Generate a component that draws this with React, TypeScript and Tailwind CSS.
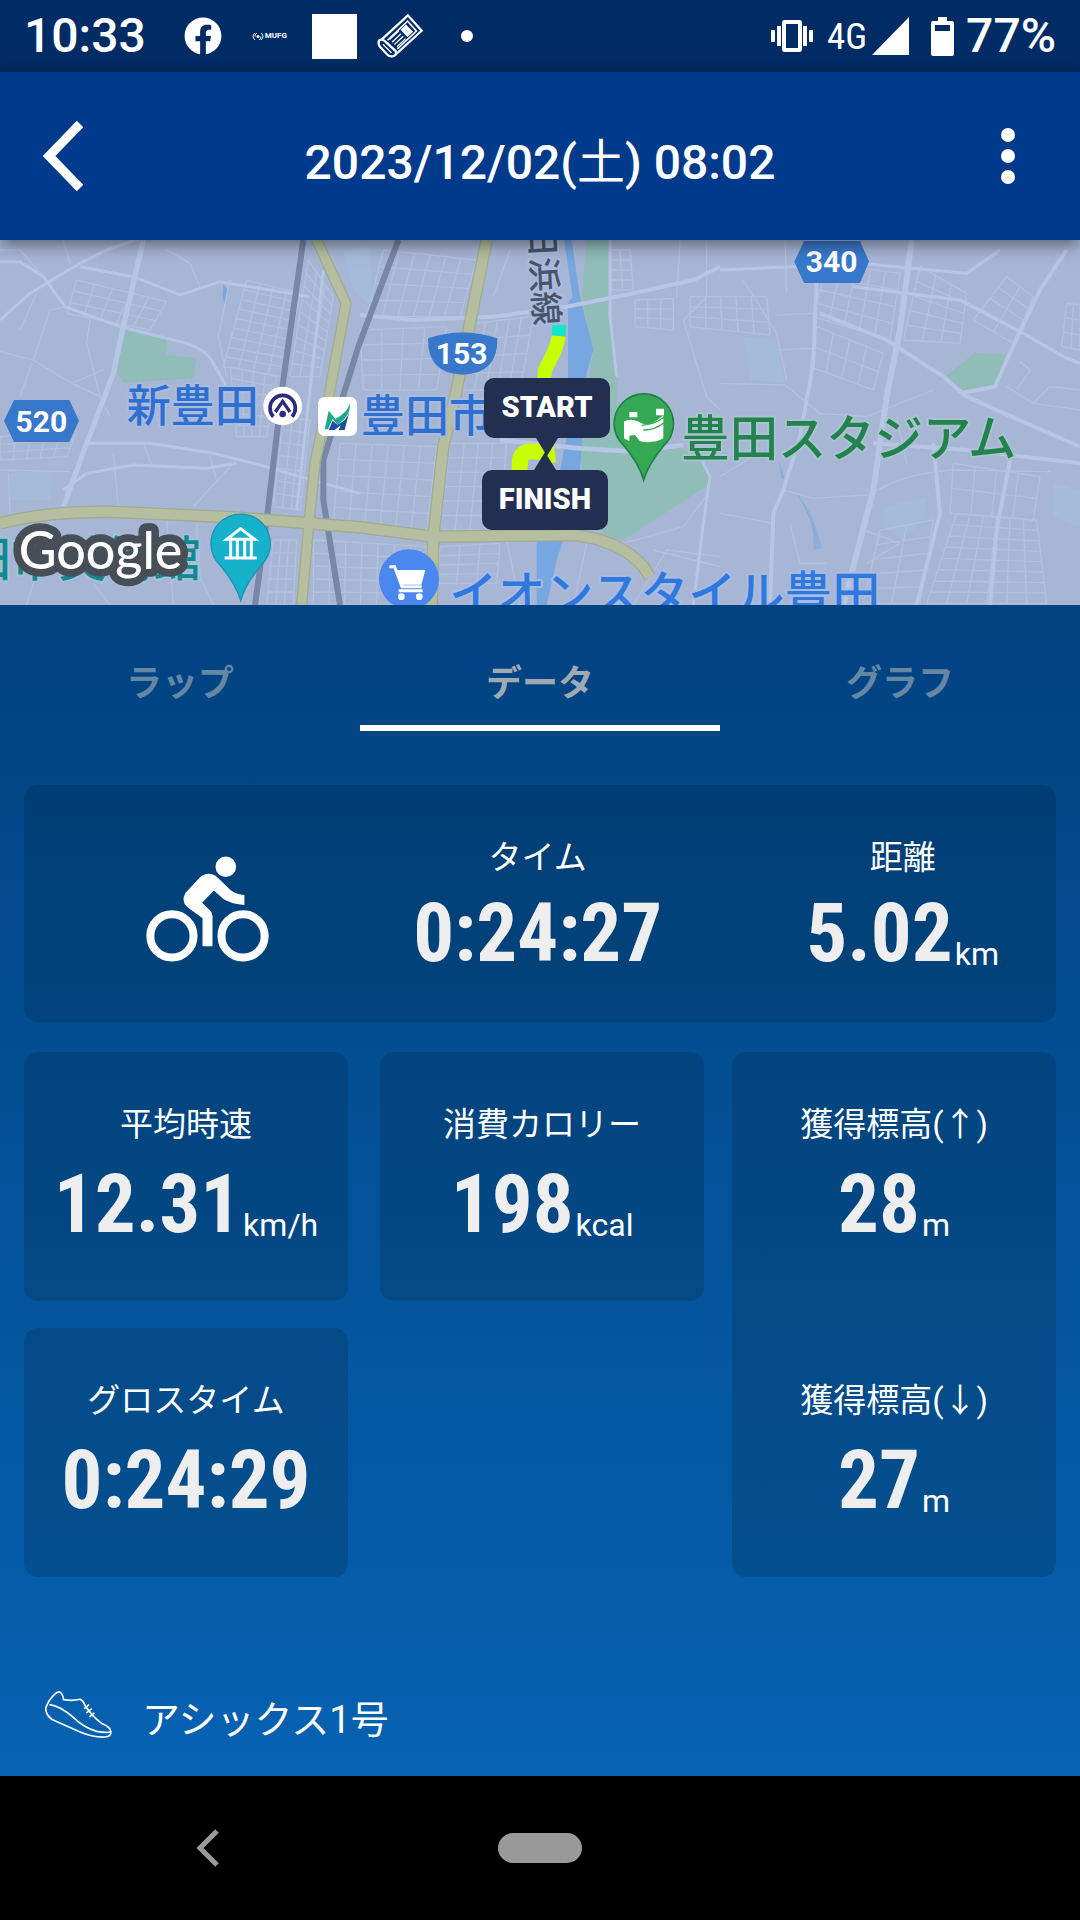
import React from "react";
import { FaFacebook } from "react-icons/fa";

type Point = [number, number];

interface BlocksProps {
  corners: [Point, Point, Point, Point];
  cols: number;
  rows: number;
}

// Side streets: a grid stretched over four corners (clockwise from top left)
const Blocks: React.FC<BlocksProps> = ({ corners, cols, rows }) => {
  const [a, b, c, d] = corners;
  const mix = (p: Point, q: Point, t: number): Point => [
    Math.round(p[0] + (q[0] - p[0]) * t),
    Math.round(p[1] + (q[1] - p[1]) * t),
  ];
  const lines: string[] = [];
  for (let i = 0; i <= cols; i++) {
    lines.push(`M${mix(a, b, i / cols)}L${mix(d, c, i / cols)}`);
  }
  for (let i = 0; i <= rows; i++) {
    lines.push(`M${mix(a, d, i / rows)}L${mix(b, c, i / rows)}`);
  }
  return <path d={lines.join("")} />;
};

const MapTiles: React.FC = () => (
  <svg
    viewBox="0 30 3240 1095"
    preserveAspectRatio="xMidYMid slice"
    className="w-full h-full block"
    aria-hidden="true"
  >
    <rect y="30" width="3240" height="1095" fill="#a7b6d5" />

    {/* Parks and ponds */}
    <g fill="#a5bcd8">
      <path d="M1030 60L1110 50L1120 240L1060 180Z" />
      <path d="M30 730L160 720L150 810L30 810Z" />
      <path d="M2230 320L2330 330L2355 460L2250 450Z" />
      <path d="M2650 830L2780 800L2780 860L2710 930L2650 890Z" />
      <path d="M3160 760L3240 780L3240 890L3160 860Z" />
    </g>
    <g fill="#90bdb8">
      <path d="M370 300L500 330L500 375L590 385L580 445L370 458L340 410Z" />
      <path d="M2835 440L2925 368L3025 375L2985 462L2880 488Z" />
      <path d="M1760 30L1830 30L1832 250L1850 440L1850 620L2040 650L2120 700L2125 765L1870 930L1820 925L1750 800L1740 640L1770 430L1780 360L1745 200Z" />
    </g>
    <g fill="#76a7e0">
      <path d="M1692 30L1715 30L1740 200L1780 360L1760 430L1745 640L1740 720L1680 720L1704 600L1704 220L1718 200Z" />
      <path d="M1610 900L1700 900L1670 990L1640 1125L1610 1125Z" />
      <path d="M670 165L685 180L675 225L668 200Z" />
      <path d="M2385 785Q2440 840 2465 955L2440 960Q2450 880 2385 785Z" opacity=".6" />
      <path d="M2335 690L2355 750L2345 745Z" opacity=".6" />
    </g>

    {/* Side streets */}
    <g fill="none" stroke="#b3c1e1" strokeWidth="4">
      <Blocks corners={[[230, 150], [500, 215], [450, 300], [200, 250]]} cols={5} rows={3} />
      <Blocks corners={[[740, 150], [900, 190], [850, 440], [670, 410]]} cols={4} rows={9} />
      <Blocks corners={[[925, 90], [1000, 200], [960, 440], [870, 440]]} cols={3} rows={9} />
      <Blocks corners={[[690, 410], [830, 440], [800, 620], [710, 620]]} cols={4} rows={6} />
      <Blocks corners={[[850, 560], [930, 570], [900, 840], [820, 830]]} cols={3} rows={7} />
      <Blocks corners={[[0, 620], [230, 600], [200, 680], [0, 690]]} cols={5} rows={3} />
      <Blocks corners={[[820, 930], [890, 930], [880, 1125], [800, 1125]]} cols={3} rows={5} />
      <Blocks corners={[[940, 930], [1280, 950], [1270, 1125], [940, 1125]]} cols={7} rows={5} />
      <Blocks corners={[[1150, 60], [1430, 90], [1380, 260], [1100, 260]]} cols={6} rows={4} />
      <Blocks corners={[[1080, 300], [1340, 290], [1310, 480], [1090, 480]]} cols={4} rows={4} />
      <Blocks corners={[[1420, 280], [1600, 260], [1560, 480], [1390, 480]]} cols={5} rows={4} />
      <Blocks corners={[[1020, 640], [1310, 650], [1280, 900], [1000, 880]]} cols={6} rows={5} />
      <Blocks corners={[[1350, 640], [1520, 640], [1500, 900], [1320, 900]]} cols={4} rows={6} />
      <Blocks corners={[[1320, 950], [1500, 940], [1490, 1060], [1310, 1060]]} cols={3} rows={4} />
      <Blocks corners={[[1830, 60], [1890, 60], [1900, 180], [1835, 180]]} cols={2} rows={4} />
      <Blocks corners={[[1905, 210], [2020, 205], [2020, 300], [1905, 290]]} cols={3} rows={3} />
      <Blocks corners={[[2070, 200], [2300, 200], [2310, 315], [2070, 290]]} cols={5} rows={3} />
      <Blocks corners={[[2480, 100], [2700, 130], [2670, 330], [2440, 260]]} cols={5} rows={4} />
      <Blocks corners={[[2760, 110], [2900, 190], [2880, 340], [2710, 330]]} cols={3} rows={5} />
      <Blocks corners={[[3020, 140], [3100, 200], [3040, 340], [2920, 270]]} cols={2} rows={4} />
      <Blocks corners={[[2450, 290], [2650, 370], [2620, 480], [2430, 410]]} cols={4} rows={2} />
      <Blocks corners={[[2860, 700], [3120, 740], [3100, 870], [2850, 850]]} cols={4} rows={2} />
      <Blocks corners={[[2870, 850], [3110, 870], [3140, 1120], [2780, 1120]]} cols={6} rows={8} />
      <Blocks corners={[[2640, 900], [2800, 870], [2760, 1120], [2590, 1120]]} cols={2} rows={5} />
      <Blocks corners={[[3200, 220], [3240, 225], [3240, 360], [3185, 350]]} cols={2} rows={3} />
      <path d="M0 365L100 390L215 460L300 500M100 390L150 240L195 230M60 300L110 190M270 270L260 340L300 500L330 560M215 460L310 420M95 400L60 500M0 720L210 725M25 730L30 850M340 670L355 830M430 640L455 705M580 830L700 700M630 680L650 750M690 150L655 320L680 440M500 60L570 100L600 170M0 60L60 60L130 140M190 30L210 100" />
      <path d="M160 870L60 1000M330 1125L280 1060M500 870L520 1125M590 880L600 1040L640 1125M100 1060L80 1125" />
      <path d="M2160 460L2355 465L2410 510L2460 550L2600 560L2800 480M2230 150L2330 310L2360 450M2330 360L2440 355M2330 255L2440 250M2355 30L2360 190M2160 850L2320 880M2350 780L2440 805L2600 795M2370 880L2400 1000L2480 1000M2600 800Q2700 730 2860 720L3150 725M2690 560L2720 700M2590 900L2700 940L2600 1000M3020 470L3100 520L3240 540M3060 395L3090 420L3050 480M3100 520L3150 470L3240 480" />
      <path d="M2120 30L2120 200L2050 270L2120 500L2160 540M2040 30L2030 200M1530 60L1480 200M2160 740L2290 660M1870 940L2050 890L2125 790M1900 1125L2000 960L2160 980M1760 940L1720 1125M1520 930L1560 1125M1960 960L2160 1010" />
    </g>

    {/* Through roads */}
    <g fill="none" stroke="#b7c5e6" strokeWidth="9">
      <path d="M0 95L60 95L130 140L195 230L360 290L560 340Q620 360 640 400L680 470" />
      <path d="M0 270L90 190L240 100L320 60L420 25" />
      <path d="M240 110L400 140L540 195L660 155L930 200" />
      <path d="M260 640L450 640L640 670L780 705M190 780L260 730L400 705L620 715L710 700M780 705L900 740L1080 790" />
      <path d="M970 120L930 480L890 840" />
      <path d="M1080 255L1240 270L1480 260L1700 230L1900 190L2080 150L2160 110" strokeWidth="12" />
      <path d="M1500 630L1740 655L1900 665L2050 645" strokeWidth="14" />
      <path d="M1830 30L1830 260L1850 440M2100 680L2130 740L2110 880L2080 1125" />
      <path d="M2160 120L2380 110L2580 100L2740 115L2900 130L3000 60" />
      <path d="M2450 150L2440 400L2400 620L2350 780L2320 850L2310 1125" strokeWidth="12" />
      <path d="M2735 30L2700 300L2660 500L2620 780L2530 1125" strokeWidth="18" />
      <path d="M2460 250L2660 330L2830 440L2900 500L3080 580L3240 650" strokeWidth="12" />
      <path d="M2560 170L2880 210L3070 310L3200 385L3240 400" strokeWidth="10" />
      <path d="M3200 60L3120 180L3020 390L2985 470L2880 490" strokeWidth="12" />
      <path d="M2620 640L2900 660L3240 700M3030 690L2990 900L2970 1125M2800 640L2820 850L2750 1125" strokeWidth="12" />
      <path d="M430 30L370 290L340 430L260 640L190 830" strokeWidth="16" />
    </g>

    {/* Railways */}
    <g fill="none" stroke="#7787a8" strokeWidth="18">
      <path d="M910 30L850 450L800 870L765 1125" />
      <path d="M1195 30L1075 350L970 690L970 810L1020 1125" />
    </g>

    {/* National roads */}
    <g fill="none" strokeLinejoin="round">
      <g stroke="#a2aa92" strokeWidth="38">
        <path d="M0 880Q150 842 350 846L700 862L1080 892L1300 920L1720 915Q1860 930 1930 1010L1950 1040" />
        <path d="M950 30L1038 220L990 480L945 700L925 900L905 1125" strokeWidth="34" />
        <path d="M1460 30L1370 480L1330 650L1300 920L1295 1125" />
      </g>
      <g stroke="#b5be9f" strokeWidth="30">
        <path d="M0 880Q150 842 350 846L700 862L1080 892L1300 920L1720 915Q1860 930 1930 1010L1950 1040" />
        <path d="M950 30L1038 220L990 480L945 700L925 900L905 1125" strokeWidth="26" />
        <path d="M1460 30L1370 480L1330 650L1300 920L1295 1125" />
      </g>
    </g>

    {/* Recorded route */}
    <g fill="none" stroke="#c8ff00" strokeWidth="42">
      <path d="M1678 315L1665 360L1635 420L1630 480" />
      <path d="M1558 730L1560 690Q1565 662 1600 664L1640 668L1645 700" strokeWidth="48" />
      <path d="M1678 284L1676 318" stroke="#14e6c8" />
    </g>

    {/* Road number shields */}
    <g fill="#3878cc">
      <path d="M42 510L208 510L237 572L208 636L42 636L12 572Z" />
      <path d="M2412 33L2580 33L2607 95L2580 159L2412 159L2383 95Z" />
      <path d="M1284 325Q1388 290 1492 325Q1494 432 1388 434Q1282 432 1284 325Z" />
    </g>
    <g fill="#fff" textAnchor="middle" className="font-[Roboto,sans-serif] font-bold text-[90px]">
      <text x="124" y="606">520</text>
      <text x="2495" y="127">340</text>
      <text x="1385" y="401">153</text>
    </g>

    {/* Place names */}
    <g
      strokeWidth="12"
      strokeLinejoin="round"
      paintOrder="stroke"
      className="font-['Noto_Sans_CJK_JP',sans-serif] font-medium text-[132px]"
    >
      <g fill="#2f6fd0" stroke="#a9bbdf">
        <text x="380" y="577">新豊田</text>
        <text x="1083" y="607">豊田市</text>
        <text x="1348" y="1142" fill="#2f78e0" className="text-[144px]">イオンスタイル豊田</text>
      </g>
      <text x="2044" y="679" fill="#23824f" stroke="#a9c3cf" className="text-[145px]">豊田スタジアム</text>
      <text x="-108" y="1038" fill="#138892" stroke="#a6c3d6" className="text-[142px]">田市美術館</text>
      <text
        transform="translate(1588 -18) rotate(87)"
        fill="#4a5468"
        stroke="#a9bbdf"
        className="text-[102px]"
      >
        日浜線
      </text>
    </g>

    {/* Stations */}
    <circle cx="848" cy="528" r="58" fill="#fff" />
    <path d="M820 560A38 38 0 1 1 876 560" fill="none" stroke="#2d2a80" strokeWidth="11" />
    <path d="M826 546L848 514L870 546" fill="none" stroke="#2d2a80" strokeWidth="10" />
    <circle cx="848" cy="552" r="10" fill="#2d2a80" />
    <rect x="954" y="501" width="117" height="117" rx="20" fill="#fff" />
    <path d="M974 598L986 542L1006 566Q1040 552 1050 520Q1052 560 1012 584L998 566L984 598Z" fill="#1fa98c" />
    <path d="M1012 584Q1040 572 1048 545L1034 600L1016 600L1022 586L1004 600L986 600L998 572Z" fill="#1d4f9e" />

    {/* Pins */}
    <path d="M722 1112Q708 1062 660 1005A89 89 0 1 1 784 1005Q736 1062 722 1112Z" fill="#16b2cb" stroke="#1a93b5" strokeWidth="4" />
    <g fill="none" stroke="#fff" strokeWidth="9">
      <path d="M680 928L722 896L764 928ZM674 984L770 984M692 932V980M712 932V980M734 932V980M754 932V980" />
    </g>
    <path d="M1931 750Q1917 700 1870 645A89 89 0 1 1 1993 645Q1946 700 1931 750Z" fill="#34a853" stroke="#1f8048" strokeWidth="5" />
    <path d="M1872 574Q1895 562 1925 580Q1950 592 1990 556L1990 625Q1960 642 1920 634L1905 615L1888 617L1888 634L1872 625ZM1888 546L1912 546L1912 562L1888 562ZM1968 536L1992 536L1992 556L1968 556Z" fill="#fff" />
    <path d="M1925 586Q1962 584 1992 562M1930 600Q1965 600 1992 578" fill="none" stroke="#34a853" strokeWidth="4" />
    <circle cx="1227" cy="1048" r="90" fill="#4a87ee" />
    <path d="M1168 1010L1184 1010L1206 1070L1265 1070M1196 1082L1268 1082" fill="none" stroke="#fff" strokeWidth="9" />
    <path d="M1186 1020L1276 1020L1264 1064L1202 1064Z" fill="#fff" />
    <circle cx="1204" cy="1100" r="10" fill="#fff" />
    <circle cx="1258" cy="1100" r="10" fill="#fff" />

    <text
      x="56"
      y="1016"
      fill="#fff"
      stroke="#464f58"
      strokeWidth="46"
      strokeLinejoin="round"
      paintOrder="stroke"
      className="font-[Lato,sans-serif] font-medium text-[156px]"
    >
      Google
    </text>
  </svg>
);

const StatusBar: React.FC = () => (
  <div className="h-[72px] bg-[#002c66] flex items-center pl-6 pr-6 text-[48px] leading-none font-medium">
    <span>10:33</span>
    <FaFacebook size={38} className="ml-[38px]" />
    <span className="ml-[30px] flex items-center gap-px">
      <svg width="12" height="9" viewBox="0 0 12 9" fill="none" stroke="currentColor">
        <circle cx="6" cy="4.500" r="1.500" fill="currentColor" stroke="none" />
        <path d="M3 1Q-1 4.500 3 8M9 1Q13 4.500 9 8M5 1Q3 2 3 4.500M7 8Q9 7 9 4.500" />
      </svg>
      <span className="text-[8px] font-bold">MUFG</span>
    </span>
    <span className="ml-[25px] w-[45px] h-[45px] bg-white" />
    <svg width="46" height="46" viewBox="618 42 140 138" fill="none" stroke="currentColor" strokeWidth="7" className="ml-5">
      <path d="M632 122L712 48L754 95L674 168" />
      <path d="M650 124L711 66L738 96L680 150" strokeWidth="5" />
      <path d="M625 124Q636 118 648 132L674 156Q680 168 668 172Q656 176 646 164L626 142Q620 132 625 124Z" />
      <path d="M636 136L662 162" strokeWidth="4" />
      <path d="M706 76L728 98L710 114L690 92Z" fill="currentColor" stroke="none" />
      <path d="M684 96L656 122M691 104L664 130M698 112L671 137M705 119L679 144" strokeWidth="4" />
    </svg>
    <span className="ml-[38px] w-3 h-3 rounded-full bg-white" />

    <svg width="42" height="32" viewBox="0 0 42 32" fill="currentColor" className="ml-auto">
      <path d="M0 10h4v12H0zM6 6h4v20H6zM32 6h4v20h-4zM38 10h4v12h-4z" />
      <rect x="13" y="2" width="16" height="28" rx="1" fill="none" stroke="currentColor" strokeWidth="4" />
    </svg>
    <span className="ml-[14px] text-[37px] font-normal font-['Roboto_Condensed',Roboto,sans-serif]">4G</span>
    <svg width="37" height="38" viewBox="0 0 37 38" fill="currentColor" className="ml-[5px]">
      <path d="M37 0V38H0Z" />
    </svg>
    <svg width="23" height="39" viewBox="0 0 23 39" fill="currentColor" className="ml-[22px]">
      <path fillRule="evenodd" d="M7 0h9v4h5q2 0 2 2v31q0 2-2 2H2q-2 0-2-2V6q0-2 2-2h5zM4 8v6h15V8z" />
    </svg>
    <span className="ml-3">77%</span>
  </div>
);

interface StatProps {
  label: string;
  value: string;
  unit?: string;
  tight?: boolean;
}

const Stat: React.FC<StatProps> = ({ label, value, unit, tight = false }) => (
  <div className="flex flex-col items-center">
    <span className="text-[33px] leading-[48px]">{label}</span>
    <p className={`flex items-end text-[#eee] ${tight ? "mt-1" : "mt-2"}`}>
      <span className="text-[81px] leading-[96px] font-bold font-['Roboto_Condensed','Liberation_Sans_Narrow',Roboto,sans-serif]">
        {value}
      </span>
      {unit && <span className="ml-0.5 text-[32px] leading-[56px] text-white">{unit}</span>}
    </p>
  </div>
);

const Card: React.FC<{ children: React.ReactNode; className?: string }> = ({
  children,
  className = "",
}) => (
  <div className={`rounded-[14px] bg-[#02202e]/20 pt-[49px] ${className}`}>{children}</div>
);

const CyclistIcon: React.FC = () => (
  <svg width="123" height="106" viewBox="46 50 370 318" fill="currentColor" className="mt-[22px]">
    <circle cx="286" cy="82" r="31" />
    <g fill="none" stroke="currentColor" strokeWidth="24">
      <circle cx="124" cy="290" r="65" />
      <circle cx="338" cy="290" r="65" />
    </g>
    <path d="M235 103Q250 103 262 115L300 152Q318 166 342 167L342 197Q305 195 280 180L250 153L215 190L240 215Q246 222 246 230L246 321L216 321L216 237L170 203Q150 185 165 160L205 117Q218 103 235 103Z" />
  </svg>
);

const ShoeIcon: React.FC = () => (
  <svg width="67" height="47" viewBox="44 54 202 142" fill="none" stroke="currentColor" strokeWidth="5">
    <path d="M88 57Q97 60 100 80Q125 85 150 79Q160 84 165 98Q185 130 215 152Q243 163 243 178Q243 192 225 193Q190 195 150 178L65 140Q45 125 46 105Q55 80 75 62Q82 56 88 57Z" />
    <path d="M57 95Q90 100 125 130Q160 165 200 176Q225 181 241 178" />
    <path d="M162 108L177 95M169 120L185 107M178 132L193 120" />
  </svg>
);

const tabs = [
  { name: "ラップ", active: false },
  { name: "データ", active: true },
  { name: "グラフ", active: false },
];

export default function App() {
  return (
    <div className="min-h-screen flex flex-col bg-black text-white font-[Roboto,'Noto_Sans_CJK_JP',sans-serif]">
      <StatusBar />

      {/* Header */}
      <header className="relative z-10 h-[168px] bg-[#003a8c] shadow-[0_4px_16px_rgba(0,0,0,0.5)] flex items-center justify-between pl-[42px] pr-15">
        <button type="button" aria-label="戻る">
          <svg width="42" height="72" viewBox="0 0 42 72" fill="none" stroke="currentColor" strokeWidth="9">
            <path d="M38 4L7 36L38 68" />
          </svg>
        </button>
        <h1 className="text-[48px] leading-none font-medium pt-3.5">
          2023/12/02(<span className="font-normal">土</span>) 08:02
        </h1>
        <button type="button" aria-label="メニュー">
          <svg width="24" height="58" viewBox="0 0 24 58" fill="currentColor">
            <circle cx="12" cy="8" r="7" />
            <circle cx="12" cy="29" r="7" />
            <circle cx="12" cy="50" r="7" />
          </svg>
        </button>
      </header>

      {/* Map */}
      <section className="relative h-[365px] overflow-hidden">
        <MapTiles />
        <div className="absolute left-[484px] top-[138px] flex flex-col items-center">
          <span className="w-[126px] h-[60px] rounded-[10px] bg-[#222f50] flex items-center justify-center text-[29px] font-black">
            START
          </span>
          <svg width="22" height="18" viewBox="0 0 22 18" fill="#222f50">
            <path d="M0 0H22L11 18Z" />
          </svg>
        </div>
        <div className="absolute left-[482px] top-[212px] flex flex-col items-center">
          <svg width="22" height="18" viewBox="0 0 22 18" fill="#222f50">
            <path d="M11 0L22 18H0Z" />
          </svg>
          <span className="w-[126px] h-[60px] rounded-[10px] bg-[#222f50] flex items-center justify-center text-[29px] font-black">
            FINISH
          </span>
        </div>
      </section>

      <main className="flex-1 flex flex-col bg-linear-to-b from-[#014280] to-[#0762b2]">
        {/* Tabs */}
        <nav className="grid grid-cols-3">
          {tabs.map((tab) => (
            <button
              key={tab.name}
              type="button"
              className={`h-[126px] pt-[38px] border-b-[6px] text-[36px] font-bold ${
                tab.active ? "border-white text-[#9fa9b4]" : "border-transparent text-[#6687a3]"
              }`}
            >
              {tab.name}
            </button>
          ))}
        </nav>

        {/* Stats */}
        <div className="px-6 pt-[54px]">
          <Card className="h-[237px] flex items-start justify-between pl-[122px] pr-[57px]">
            <CyclistIcon />
            <Stat label="タイム" value="0:24:27" tight />
            <Stat label="距離" value="5.02" unit="km" tight />
          </Card>

          <div className="mt-[30px] grid grid-cols-[21fr_10fr] gap-7">
            <div className="grid grid-cols-2 gap-x-8 gap-y-[27px]">
              <Card className="h-[249px]">
                <Stat label="平均時速" value="12.31" unit="km/h" />
              </Card>
              <Card className="h-[249px]">
                <Stat label="消費カロリー" value="198" unit="kcal" />
              </Card>
              <Card className="h-[249px]">
                <Stat label="グロスタイム" value="0:24:29" />
              </Card>
            </div>
            <Card className="flex flex-col gap-31">
              <Stat label="獲得標高(↑)" value="28" unit="m" />
              <Stat label="獲得標高(↓)" value="27" unit="m" />
            </Card>
          </div>
        </div>

        {/* Gear */}
        <div className="mt-auto flex items-center gap-[30px] pl-[45px] pb-7 text-[38px] leading-[56px]">
          <ShoeIcon />
          <span className="pt-3">アシックス1号</span>
        </div>
      </main>

      {/* System navigation */}
      <footer className="h-36 bg-black text-[#999] grid grid-cols-[416fr_248fr_416fr] items-center">
        <button type="button" aria-label="戻る" className="justify-self-center">
          <svg width="24" height="38" viewBox="0 0 24 38" fill="none" stroke="currentColor" strokeWidth="5">
            <path d="M21 2L4 19L21 36" />
          </svg>
        </button>
        <button
          type="button"
          aria-label="ホーム"
          className="justify-self-center w-[84px] h-[30px] rounded-full bg-[#999]"
        />
      </footer>
    </div>
  );
}
